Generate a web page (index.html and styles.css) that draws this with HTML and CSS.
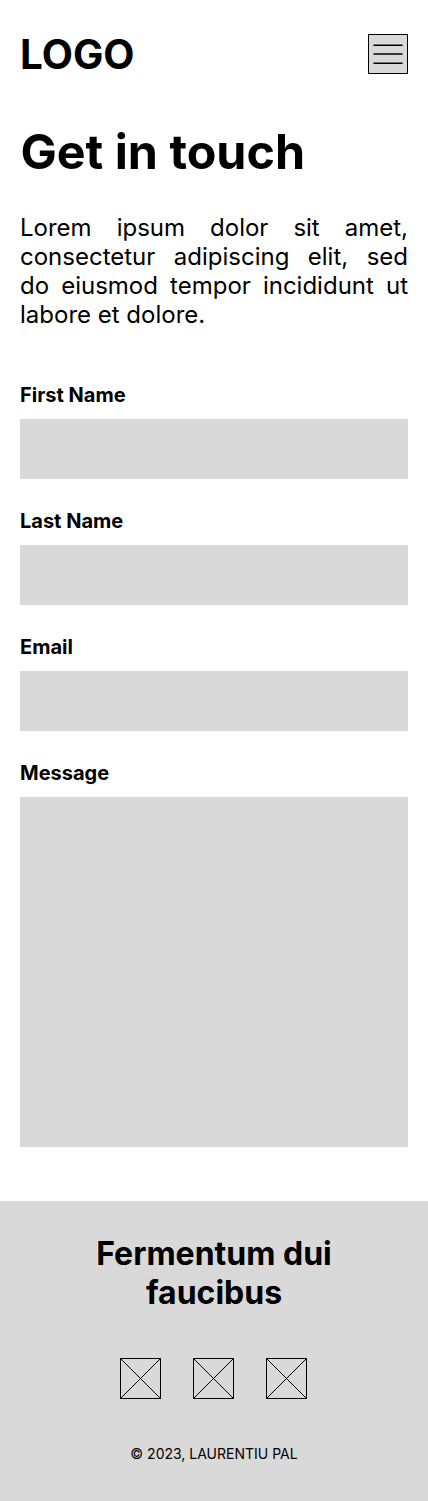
FILE: index.html
```html
<!DOCTYPE html>
<html lang="en">
<head>
<meta charset="utf-8">
<title>Get in touch</title>
<link rel="stylesheet" href="styles.css">
</head>
<body>
<header class="header">
  <div class="logo">LOGO</div>
  <button class="menu" type="button" aria-label="Menu">
    <svg width="40" height="40" viewBox="0 0 40 40" fill="none" stroke="#000"><rect x=".5" y=".5" width="39" height="39"/><path d="M6 11.25H34M6 20H34M6 29.25H34" stroke-width="1.5" stroke-linecap="round"/></svg>
  </button>
</header>
<main class="main">
  <h1 class="title">Get in touch</h1>
  <p class="intro">Lorem ipsum dolor sit amet, consectetur adipiscing elit, sed do eiusmod tempor incididunt ut labore et dolore.</p>
  <form class="form">
    <label class="field"><span class="label">First Name</span><input class="input" type="text"></label>
    <label class="field"><span class="label">Last Name</span><input class="input" type="text"></label>
    <label class="field"><span class="label">Email</span><input class="input" type="email"></label>
    <label class="field"><span class="label">Message</span><textarea class="input message"></textarea></label>
  </form>
</main>
<footer class="footer">
  <h2 class="footer-title">Fermentum dui faucibus</h2>
  <div class="social">
    <svg class="icon" viewBox="0 0 41 41"><path d="M.5 .5H40.5V40.5H.5ZL40.5 40.5M40.5 .5L.5 40.5"/></svg>
    <svg class="icon" viewBox="0 0 41 41"><path d="M.5 .5H40.5V40.5H.5ZL40.5 40.5M40.5 .5L.5 40.5"/></svg>
    <svg class="icon" viewBox="0 0 41 41"><path d="M.5 .5H40.5V40.5H.5ZL40.5 40.5M40.5 .5L.5 40.5"/></svg>
  </div>
  <p class="copyright">© 2023, LAURENTIU PAL</p>
</footer>
</body>
</html>
```

FILE: styles.css
```css
* { box-sizing: border-box; margin: 0; padding: 0; }
body { background: #fff; color: #000; font-family: Inter, sans-serif; }
.header { display: flex; justify-content: space-between; align-items: center; height: 68px; margin-top: 20px; padding: 0 20px; }
.logo { padding-top: 2px; font-size: 40.5px; font-weight: 700; line-height: 48px; }
.menu { width: 40px; height: 40px; border: 0; background: #d9d9d9; }
.menu svg { display: block; }
.main { padding: 35px 20px 54px; }
.title { padding-left: 0.4px; font-size: 48.4px; font-weight: 700; line-height: 58px; }
.intro { margin-top: 32px; font-size: 24px; line-height: 29px; text-align: justify; }
.form { display: flex; flex-direction: column; gap: 30px; margin-top: 54px; }
.field { display: flex; flex-direction: column; gap: 12px; }
.label { font-size: 20px; font-weight: 700; line-height: 24px; }
.input { display: block; width: 100%; height: 60px; border: 0; border-radius: 0; background: #d9d9d9; resize: none; }
.message { height: 350px; }
.footer { display: flex; flex-direction: column; align-items: center; height: 300px; padding-top: 33px; background: #d9d9d9; }
.footer-title { width: 300px; font-size: 32px; font-weight: 700; line-height: 39px; text-align: center; }
.social { display: flex; gap: 32px; width: 188px; margin-top: 46px; }
.icon { flex: none; width: 41px; height: 41px; fill: none; stroke: #000; }
.copyright { margin-top: 46px; font-size: 14px; line-height: 17px; }
```
